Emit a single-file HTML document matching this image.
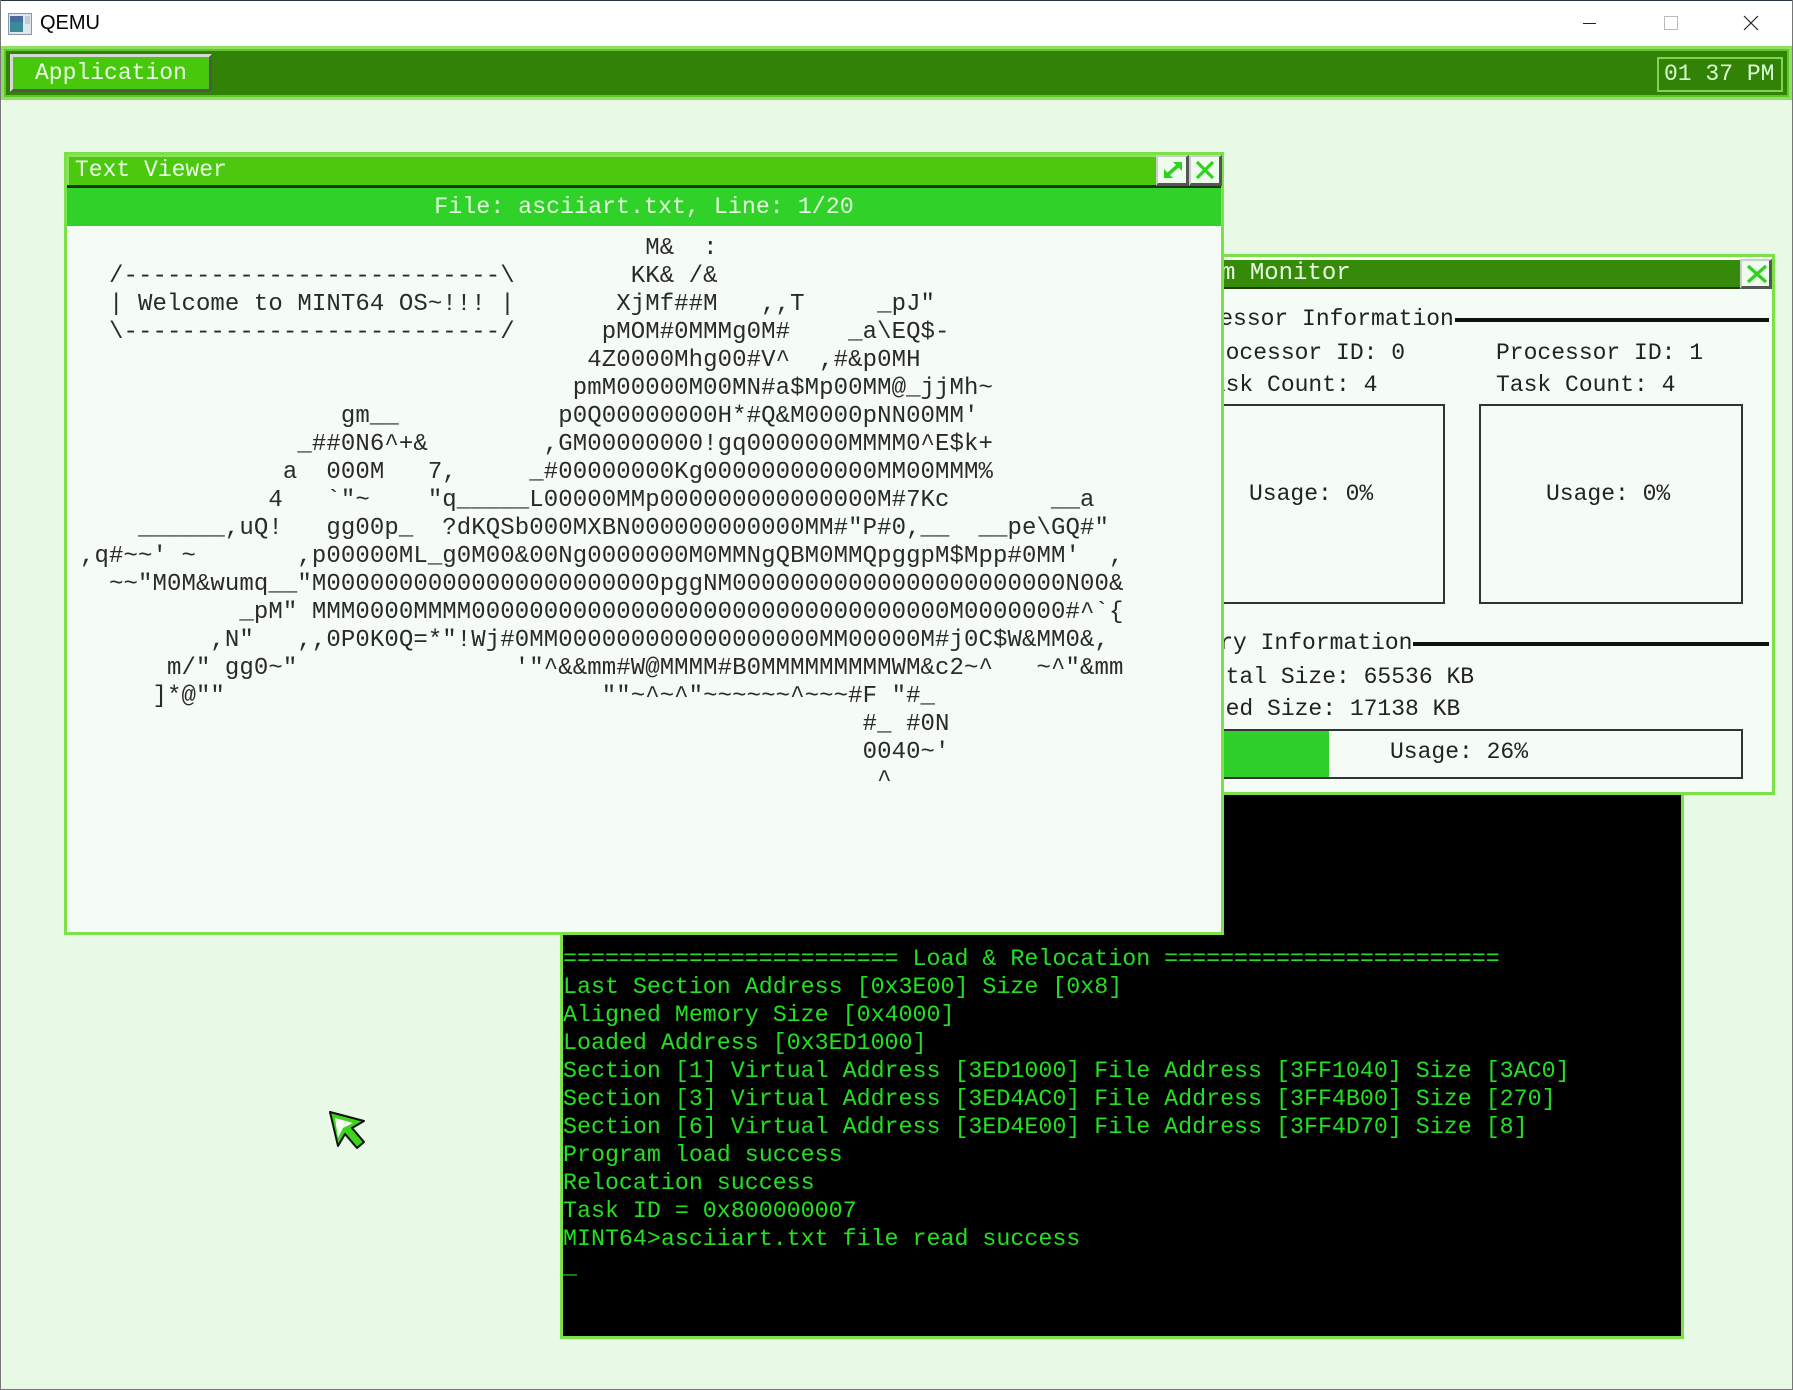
<!DOCTYPE html>
<html><head><meta charset="utf-8"><style>
*{margin:0;padding:0;box-sizing:border-box}
html,body{width:1793px;height:1390px;overflow:hidden;background:#e8f9e6;font-family:"Liberation Mono",monospace}
.a{position:absolute}
.mono{font-family:"Liberation Mono",monospace;white-space:pre}
</style></head><body>
<div class="a" style="left:0;top:0;width:1793px;height:46px;background:#fff;border-top:1px solid #2a3440"></div>
<div class="a" style="left:0;top:0;width:1px;height:1390px;background:#777"></div>
<div class="a" style="left:1792px;top:0;width:1px;height:1390px;background:#777"></div>
<div class="a" style="left:0;top:1389px;width:1793px;height:1px;background:#777"></div>
<svg class="a" style="left:8px;top:13px" width="24" height="22"><rect x="0.5" y="0.5" width="23" height="21" fill="#dfe6ee" stroke="#8a96a3"/><rect x="2" y="3" width="13" height="16" fill="#3a8a9a"/><rect x="2" y="3" width="13" height="6" fill="#4a6aa0"/><rect x="17" y="3" width="5" height="8" fill="#c0ccd8"/></svg>
<div class="a" style="left:40px;top:12px;font:20px 'Liberation Sans',sans-serif;color:#000">QEMU</div>
<div class="a" style="left:1583px;top:23px;width:13px;height:1px;background:#222"></div>
<div class="a" style="left:1664px;top:16px;width:14px;height:14px;border:1px solid #bbb"></div>
<svg class="a" style="left:1743px;top:15px" width="16" height="16"><path d="M1 1L15 15M15 1L1 15" stroke="#222" stroke-width="1.2"/></svg>

<div class="a" style="left:1px;top:46px;width:1791px;height:54px;background:#8fe060"></div>
<div class="a" style="left:4px;top:49px;width:1785px;height:48px;background:#5cc82a"></div>
<div class="a" style="left:6px;top:51px;width:1781px;height:44px;background:#338208"></div>
<div class="a" style="left:10px;top:54px;width:202px;height:38px;background:#48c80a;border-top:3px solid #d8d8d8;border-left:3px solid #d8d8d8;border-bottom:3px solid #555;border-right:3px solid #555"></div>
<div class="a mono" style="left:35px;top:58px;font-size:23px;line-height:30px;color:#eaffea">Application</div>
<div class="a" style="left:1657px;top:57px;width:126px;height:35px;border:2px solid #7ad850"></div>
<div class="a mono" style="left:1664px;top:59px;font-size:23px;line-height:31px;color:#d8ffd0">01 37 PM</div>

<div class="a" style="left:560px;top:700px;width:1124px;height:639px;background:#000;border:3px solid #7ce048"></div>
<div class="a mono" style="left:563px;top:945px;font-size:23.3px;line-height:28px;color:#22e022">======================== Load &amp; Relocation ========================
Last Section Address [0x3E00] Size [0x8]
Aligned Memory Size [0x4000]
Loaded Address [0x3ED1000]
Section [1] Virtual Address [3ED1000] File Address [3FF1040] Size [3AC0]
Section [3] Virtual Address [3ED4AC0] File Address [3FF4B00] Size [270]
Section [6] Virtual Address [3ED4E00] File Address [3FF4D70] Size [8]
Program load success
Relocation success
Task ID = 0x800000007
MINT64&gt;asciiart.txt file read success
_</div>

<div class="a" style="left:1100px;top:254px;width:675px;height:541px;background:#f5fbf5;border:3px solid #7ce048"></div>
<div class="a" style="left:1103px;top:260px;width:669px;height:29px;background:#358a0a;border-bottom:2px solid #1e4008"></div>
<div class="a mono" style="left:1149px;top:259px;font-size:24px;line-height:29px;color:#e8ffe0">System Monitor</div>
<div class="a" style="left:1740px;top:259px;width:32px;height:30px;background:#eefcee;border-right:3px solid #555;border-bottom:3px solid #555;border-top:2px solid #ccc;border-left:2px solid #ccc"></div>
<svg class="a" style="left:1746px;top:264px" width="22" height="20"><path d="M2 2L20 18M20 2L2 18" stroke="#30d020" stroke-width="3.2"/></svg>
<div class="a mono" style="left:1164px;top:305px;font-size:23px;line-height:28px;color:#222">Processor Information</div>
<div class="a" style="left:1455px;top:318px;width:314px;height:4px;background:#111"></div>
<div class="a mono" style="left:1198px;top:339px;font-size:23px;line-height:28px;color:#222">Processor ID: 0</div>
<div class="a mono" style="left:1198px;top:371px;font-size:23px;line-height:28px;color:#222">Task Count: 4</div>
<div class="a mono" style="left:1496px;top:339px;font-size:23px;line-height:28px;color:#222">Processor ID: 1</div>
<div class="a mono" style="left:1496px;top:371px;font-size:23px;line-height:28px;color:#222">Task Count: 4</div>
<div class="a" style="left:1181px;top:404px;width:264px;height:200px;border:2px solid #333"></div>
<div class="a" style="left:1479px;top:404px;width:264px;height:200px;border:2px solid #333"></div>
<div class="a mono" style="left:1249px;top:480px;font-size:23px;line-height:28px;color:#222">Usage: 0%</div>
<div class="a mono" style="left:1546px;top:480px;font-size:23px;line-height:28px;color:#222">Usage: 0%</div>
<div class="a mono" style="left:1164px;top:629px;font-size:23px;line-height:28px;color:#222">Memory Information</div>
<div class="a" style="left:1413px;top:642px;width:356px;height:4px;background:#111"></div>
<div class="a mono" style="left:1198px;top:663px;font-size:23px;line-height:28px;color:#222">Total Size: 65536 KB</div>
<div class="a mono" style="left:1198px;top:695px;font-size:23px;line-height:28px;color:#222">Used Size: 17138 KB</div>
<div class="a" style="left:1181px;top:729px;width:562px;height:50px;border:2px solid #333"></div>
<div class="a" style="left:1183px;top:731px;width:146px;height:46px;background:#30d02a"></div>
<div class="a mono" style="left:1390px;top:738px;font-size:23px;line-height:28px;color:#222">Usage: 26%</div>

<div class="a" style="left:64px;top:152px;width:1160px;height:783px;background:#f5fbf5;border:3px solid #7ce048"></div>
<div class="a" style="left:67px;top:155px;width:1154px;height:30px;background:#4cc80e;border-top:2px solid #8fe060;border-left:2px solid #8fe060"></div>
<div class="a" style="left:67px;top:185px;width:1154px;height:3px;background:#1c3612"></div>
<div class="a" style="left:67px;top:188px;width:1154px;height:38px;background:#30d22a"></div>
<div class="a mono" style="left:75px;top:155px;font-size:23px;line-height:31px;color:#eaffea">Text Viewer</div>
<div class="a mono" style="left:67px;top:190px;width:1154px;text-align:center;font-size:23.3px;line-height:34px;color:#e6ffe0">File: asciiart.txt, Line: 1/20</div>
<div class="a" style="left:1156px;top:155px;width:33px;height:31px;background:#eefcee;border-right:3px solid #555;border-bottom:3px solid #555;border-top:2px solid #ccc;border-left:2px solid #ccc"></div>
<div class="a" style="left:1189px;top:155px;width:33px;height:31px;background:#eefcee;border-right:3px solid #555;border-bottom:3px solid #555;border-top:2px solid #ccc;border-left:2px solid #ccc"></div>
<svg class="a" style="left:1161px;top:159px" width="24" height="22"><path d="M4 18L20 4" stroke="#30d020" stroke-width="3.5"/><path d="M12 3H21V12Z" fill="#30d020"/><path d="M3 10V19H12Z" fill="#30d020"/></svg>
<svg class="a" style="left:1194px;top:159px" width="22" height="22"><path d="M3 3L19 19M19 3L3 19" stroke="#30d020" stroke-width="3.2"/></svg>

<div class="a mono" style="left:80px;top:235px;font-size:24px;line-height:28px;letter-spacing:0.09px;color:#2a2a2a">                                       M&amp;  :
  /--------------------------\        KK&amp; /&amp;
  | Welcome to MINT64 OS~!!! |       XjMf##M   ,,T     _pJ"
  \--------------------------/      pMOM#0MMMg0M#    _a\EQ$-
                                   4Z0000Mhg00#V^  ,#&amp;p0MH
                                  pmM00000M00MN#a$Mp00MM@_jjMh~
                  gm__           p0Q00000000H*#Q&amp;M0000pNN00MM'
               _##0N6^+&amp;        ,GM00000000!gq0000000MMMM0^E$k+
              a  000M   7,     _#00000000Kg000000000000MM00MMM%
             4   `"~    "q_____L00000MMp000000000000000M#7Kc       __a
    ______,uQ!   gg00p_  ?dKQSb000MXBN000000000000MM#"P#0,__  __pe\GQ#"
,q#~~' ~       ,p00000ML_g0M00&amp;00Ng0000000M0MMNgQBM0MMQpggpM$Mpp#0MM'  ,
  ~~"M0M&amp;wumq__"M00000000000000000000000pggNM00000000000000000000000N00&amp;
           _pM" MMM0000MMMM000000000000000000000000000000000M0000000#^`{
         ,N"   ,,0P0K0Q=*"!Wj#0MM000000000000000000MM00000M#j0C$W&amp;MM0&amp;,
      m/" gg0~"               '"^&amp;&amp;mm#W@MMMM#B0MMMMMMMMMWM&amp;c2~^   ~^"&amp;mm
     ]*@""                          ""~^~^"~~~~~~^~~~#F "#_
                                                      #_ #0N
                                                      0040~'
                                                       ^</div>

<svg class="a" style="left:326px;top:1108px" width="44" height="44"><path d="M4 4L38 13L26 20L38 34L31 40L19 26L12 38Z" fill="#3ed41e" stroke="#111" stroke-width="2" stroke-linejoin="round"/><path d="M9 10L27 15L17 20L12 30Z" fill="#f4fff0"/></svg>
</body></html>
